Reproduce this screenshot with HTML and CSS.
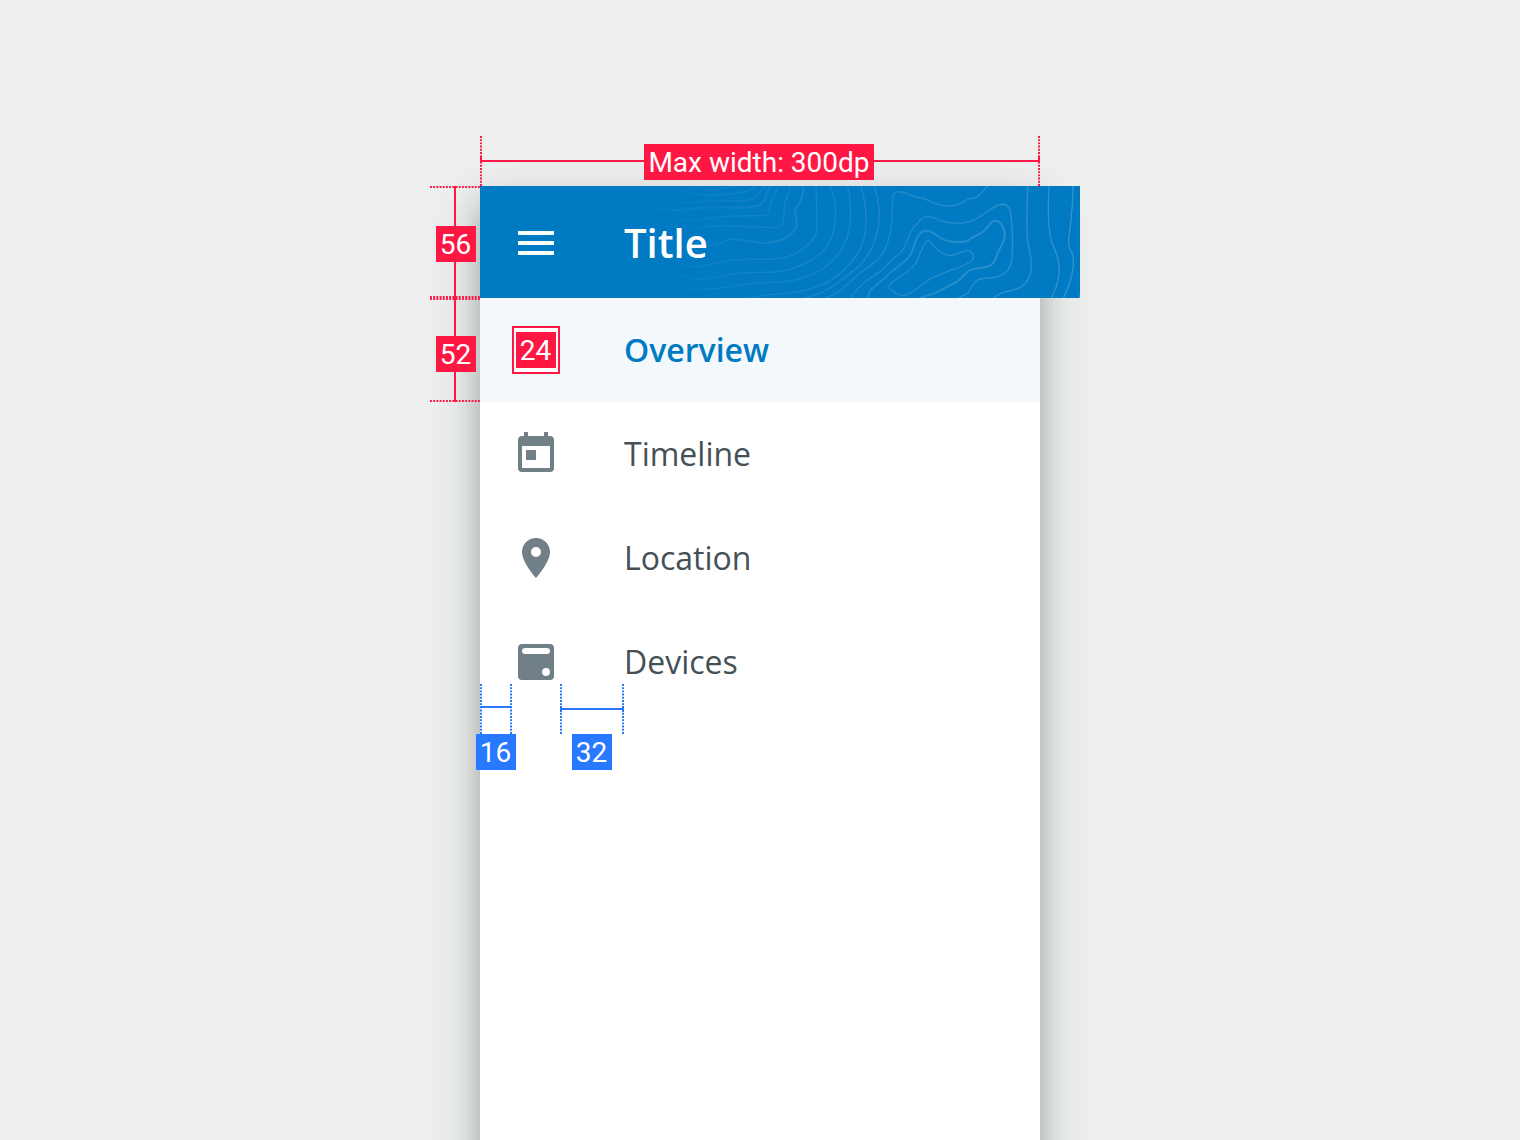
FILE: index.html
```html
<!DOCTYPE html>
<html lang="en">
<head>
<meta charset="utf-8">
<title>Navigation drawer specs</title>
<link rel="stylesheet" href="styles.css">
</head>
<body>
<main class="stage">
  <div class="drawer">
    <header class="appbar">
      <svg class="topo" viewBox="0 0 600 112" aria-hidden="true">
        <defs>
          <linearGradient id="fade" gradientUnits="userSpaceOnUse" x1="130" y1="0" x2="600" y2="0">
            <stop offset="0" stop-color="#fff" stop-opacity="0"/>
            <stop offset=".35" stop-color="#fff" stop-opacity=".4"/>
            <stop offset="1" stop-color="#fff" stop-opacity="1"/>
          </linearGradient>
          <mask id="fadeMask" maskUnits="userSpaceOnUse" x="0" y="0" width="600" height="112"><rect width="600" height="112" fill="url(#fade)"/></mask>
        </defs>
        <g mask="url(#fadeMask)">
          <g class="contours" transform="translate(380 -16) scale(.33333)">
            <path d="M0 310C40 280 66 262 75 238C102 180 95 110 99 76Q104 62 124 66C145 70 160 81 180 84C205 84 215 107 268 108C310 107 315 84 334 86C355 84 364 68 384 46"/>
            <path d="M0 348C40 315 62 306 78 288L123 246C142 222 145 195 159 175L183 148C200 132 220 143 240 152C270 160 310 164 338 151C365 140 390 114 417 105Q441 97 449 118C460 160 458 220 456 265C453 300 430 322 390 324C355 326 352 328 341 341C330 354 330 371 315 374L294 385"/>
            <path class="bold" d="M27 385C22 372 29 362 41 352L78 321C100 298 130 280 147 261C164 240 162 205 182 188C215 168 230 206 263 213C290 217 319 219 331 207C347 195 365 192 373 182C385 170 393 151 407 152C424 153 440 185 432 208C426 230 413 242 410 259C402 280 393 290 377 291C350 296 334 294 320 307C304 325 298 332 282 340C250 356 230 368 211 374L176 385"/>
            <path d="M88 350C91 332 123 323 141 306C155 292 169 284 173 267C184 247 188 220 202 214Q211 212 221 228C235 242 248 256 272 256C298 255 307 239 327 242C342 249 345 268 330 276C300 295 260 302 225 320C195 331 174 361 150 370C130 380 115 379 102 365Q86 358 88 350"/>
            <path d="M503 46C502 110 497 170 503 214C514 260 516 290 512 309C502 342 485 355 455 361C432 366 421 368 399 385"/>
            <path d="M567 46C563 120 564 180 575 216C586 242 600 270 597 312C594 342 584 365 574 385"/>
            <path d="M639 46C639 120 629 180 626 212Q624 228 632 240C646 265 641 301 628 342L610 385M657 385L662 370"/>
          </g>
          <g class="contours" transform="translate(160 -56) scale(.33333)">
            <path d="M0 206C70 216 120 224 180 215C240 208 300 218 332 208C356 202 360 184 374 166"/>
            <path class="bold" d="M0 229C80 243 130 242 190 234C270 230 310 236 348 229C374 224 380 190 391 166"/>
            <path d="M0 267C80 266 130 277 190 268C250 255 330 258 370 257C391 259 383 240 392 220L417 166"/>
            <path d="M160 296C210 286 250 285 300 289C355 291 385 294 410 292C443 286 426 240 436 214L454 166"/>
            <path class="bold" d="M110 351C175 354 225 352 250 334C277 319 306 332 360 339C405 342 446 326 465 298C480 273 459 255 467 236C481 217 490 202 491 166"/>
            <path d="M110 402C180 420 220 400 270 391C330 384 375 392 420 386C470 377 515 344 529 310C534 260 526 210 529 166"/>
            <path d="M0 445C60 425 85 418 120 436C170 455 210 446 260 436C320 420 384 432 430 423C490 410 550 375 567 340C593 290 592 220 570 166"/>
            <path d="M0 475C40 462 60 452 105 467C160 487 240 477 300 465C380 450 440 465 500 440C570 415 617 359 627 300C637 250 630 200 623 166"/>
            <path d="M320 505C400 486 460 495 515 476C590 453 650 396 671 330C684 270 679 220 662 166"/>
            <path d="M490 505C560 492 612 446 660 405C702 361 718 310 718 250Q715 200 702 166"/>
            <path d="M555 505C602 490 628 455 660 430M630 505C640 492 649 479 660 468"/>
            <path d="M165 166C200 178 230 180 290 166M90 166C150 200 240 202 320 183Q343 178 350 166"/>
          </g>
        </g>
      </svg>
      <svg class="icon" viewBox="0 0 48 48" aria-label="Menu"><path d="M6 13h36v4H6zM6 23h36v4H6zM6 33h36v4H6z"/></svg>
      <h1 class="title">Title</h1>
    </header>
    <nav class="nav">
      <a class="item item-active"><span class="size-box"><span class="tag">24</span></span><span class="label">Overview</span></a>
      <a class="item"><svg class="icon" viewBox="0 0 48 48"><path fill-rule="evenodd" d="M12 2h4v4h16V2h4v4h2a4 4 0 0 1 4 4v28a4 4 0 0 1-4 4H10a4 4 0 0 1-4-4V10a4 4 0 0 1 4-4h2zM10 16v22h28V16zM14 20h10v10H14z"/></svg><span class="label">Timeline</span></a>
      <a class="item"><svg class="icon" viewBox="0 0 24 24"><path d="M12 2C8.13 2 5 5.13 5 9c0 5.25 7 13 7 13s7-7.75 7-13c0-3.87-3.13-7-7-7zm0 9.5a2.5 2.5 0 0 1 0-5 2.500 2.500 0 0 1 0 5z"/></svg><span class="label">Location</span></a>
      <a class="item"><svg class="icon" viewBox="0 0 48 48"><path fill-rule="evenodd" d="M10 6h28a4 4 0 0 1 4 4v28a4 4 0 0 1-4 4H10a4 4 0 0 1-4-4V10a4 4 0 0 1 4-4zM13 10a3 3 0 0 0 0 6h22a3 3 0 0 0 0-6zM34 30a4 4 0 0 0 0 8a4 4 0 0 0 0-8z"/></svg><span class="label">Devices</span></a>
    </nav>
  </div>

  <svg class="redlines" viewBox="0 0 1520 1140" aria-hidden="true">
    <g class="red">
      <path class="dots" d="M481 136V186M1039 136V186M430 187H480M430 297H480M430 299H480M430 401H480"/>
      <path d="M480 161H1040M455 186V402M481 157V163M1039 157V163M453 187H457M453 297H457M453 299H457M453 401H457"/>
    </g>
    <g class="blue">
      <path class="dots" d="M481 684V734M511 684V734M561 684V734M623 684V734"/>
      <path d="M480 707H512M560 709H624M561 706V712M623 706V712"/>
    </g>
  </svg>
  <span class="tag pin pin-width">Max width: 300dp</span>
  <span class="tag pin pin-56">56</span>
  <span class="tag pin pin-52">52</span>
  <span class="tag tag-blue pin pin-16">16</span>
  <span class="tag tag-blue pin pin-32">32</span>
</main>
</body>
</html>
```
FILE: styles.css
```css
* { box-sizing: border-box; }
body { margin: 0; background: #eef0ef; font-family: "Open Sans", "Noto Sans", sans-serif; }
.stage { position: relative; width: 1520px; height: 1140px; padding: 186px 0 0 480px; overflow: hidden; }
.drawer {
  width: 560px; height: 1100px; background: #fff;
  box-shadow: 0 20px 48px 4px rgba(38, 50, 56, .2), 0 20px 24px rgba(38, 50, 56, .24);
}
.appbar {
  position: relative; display: flex; align-items: center; gap: 64px;
  width: 600px; height: 112px; padding: 0 32px; background: #007ac2; color: #fff;
}
.topo { position: absolute; inset: 0; width: 600px; height: 112px; }
.contours { fill: none; stroke: #fff; stroke-opacity: .2; stroke-width: 4; }
.contours .bold { stroke-width: 6; }
.icon { position: relative; flex: none; width: 48px; height: 48px; fill: #717f86; }
.appbar .icon { fill: #fff; }
.title { position: relative; margin: 0; padding-top: 2px; font-size: 40px; font-weight: 600; line-height: 56px; }
.nav { display: flex; flex-direction: column; }
.item { display: flex; align-items: center; gap: 64px; height: 104px; padding: 0 32px; color: #455056; font-size: 32px; line-height: 44px; }
.item-active { background: #f3f8fc; color: #007ac2; font-weight: 600; }
.size-box { display: flex; align-items: center; justify-content: center; width: 48px; height: 48px; border: 2px solid #ff1744; background: #fff; }
.tag {
  display: flex; align-items: center; justify-content: center; width: 40px; height: 36px; padding: 2px 1px 0 0;
  background: #ff1744; color: #fff; font: 400 28px/36px Roboto, sans-serif; white-space: nowrap;
}
.tag-blue { background: #2979ff; }
.redlines { position: absolute; inset: 0; width: 1520px; height: 1140px; fill: none; stroke-width: 2; }
.red { stroke: #ff1744; }
.blue { stroke: #2979ff; }
.dots { stroke-dasharray: 1.9 1.3; }
.pin { position: absolute; }
.pin-width { left: 644px; top: 144px; width: 230px; padding-right: 0; }
.pin-56 { left: 436px; top: 226px; }
.pin-52 { left: 436px; top: 336px; }
.pin-16 { left: 476px; top: 734px; }
.pin-32 { left: 572px; top: 734px; }
```
